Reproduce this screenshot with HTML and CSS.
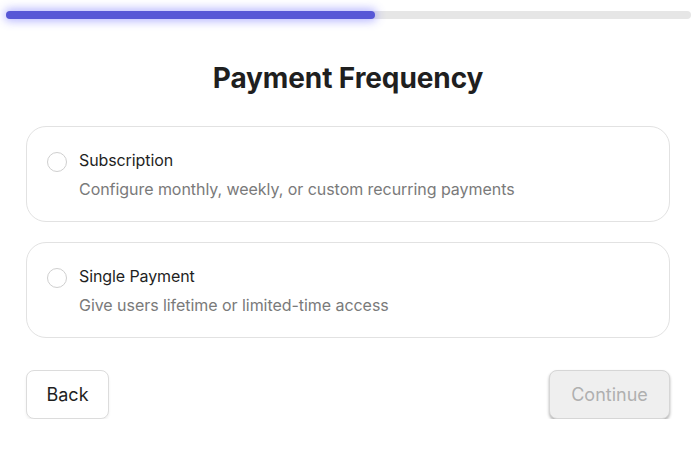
FILE: index.html
```html
<!DOCTYPE html>
<html>
<head>
<meta charset="utf-8">
<link rel="stylesheet" href="styles.css">
</head>
<body>
<div class="progress"><div class="progress-fill" style="width:53.9%"></div></div>
<main class="wrap">
  <h1 class="title">Payment Frequency</h1>
  <div class="options">
    <label class="option">
      <span class="radio"></span>
      <span class="opt-text">
        <span class="opt-title">Subscription</span>
        <span class="opt-desc">Configure monthly, weekly, or custom recurring payments</span>
      </span>
    </label>
    <label class="option">
      <span class="radio"></span>
      <span class="opt-text">
        <span class="opt-title">Single Payment</span>
        <span class="opt-desc">Give users lifetime or limited-time access</span>
      </span>
    </label>
  </div>
  <div class="actions">
    <button class="btn btn-back">Back</button>
    <button class="btn btn-continue" disabled>Continue</button>
  </div>
</main>
</body>
</html>
```
FILE: styles.css
```css
* { box-sizing: border-box; }
html, body { margin: 0; padding: 0; background: #fff; }
body { font-family: Inter, "Noto Sans", sans-serif; color: #1c1c1c; }

.progress {
  margin: 11px 8px 0 6px;
  height: 8px;
  background: #e6e6e6;
  border-radius: 4px;
}
.progress-fill {
  height: 8px;
  background: #5757d6;
  border-radius: 4px;
  box-shadow: 0 0 10px 2px rgba(90, 90, 255, 0.45);
}

.wrap {
  width: 644px;
  margin-left: 26px;
}
.title {
  margin: 41px 0 0;
  text-align: center;
  font-size: 28px;
  font-weight: 700;
  line-height: 36px;
  letter-spacing: -0.1px;
  color: #1f1f1f;
}
.options {
  margin-top: 30px;
  display: flex;
  flex-direction: column;
  gap: 20px;
}
.option {
  display: flex;
  align-items: flex-start;
  gap: 12px;
  height: 96px;
  padding: 22px 20px 0 20px;
  border: 1px solid #e2e2e2;
  border-radius: 20px;
  background: #fff;
}
.radio {
  flex: none;
  width: 20px;
  height: 20px;
  margin-top: 3px;
  border: 1px solid #cfcfcf;
  border-radius: 50%;
}
.opt-text { display: flex; flex-direction: column; }
.opt-title {
  font-size: 16px;
  line-height: 22px;
  color: #1f1f1f;
  letter-spacing: -0.1px;
}
.opt-desc {
  margin-top: 7px;
  font-size: 16px;
  line-height: 22px;
  color: #7a7a7a;
  letter-spacing: -0.05px;
}
.actions {
  margin-top: 32px;
  display: flex;
  justify-content: space-between;
}
.btn {
  font-family: inherit;
  font-size: 18px;
  height: 49px;
  border-radius: 8px;
  cursor: pointer;
}
.btn-back {
  width: 83px;
  background: #fff;
  color: #1f1f1f;
  border: 1px solid #dcdcdc;
  box-shadow: 0 2px 3px rgba(0,0,0,0.06);
}
.btn-continue {
  width: 121px;
  background: #efefef;
  color: #b0b0b0;
  border: 1px solid #d6d6d6;
  box-shadow: 0 2px 3px rgba(0,0,0,0.3);
}
```
